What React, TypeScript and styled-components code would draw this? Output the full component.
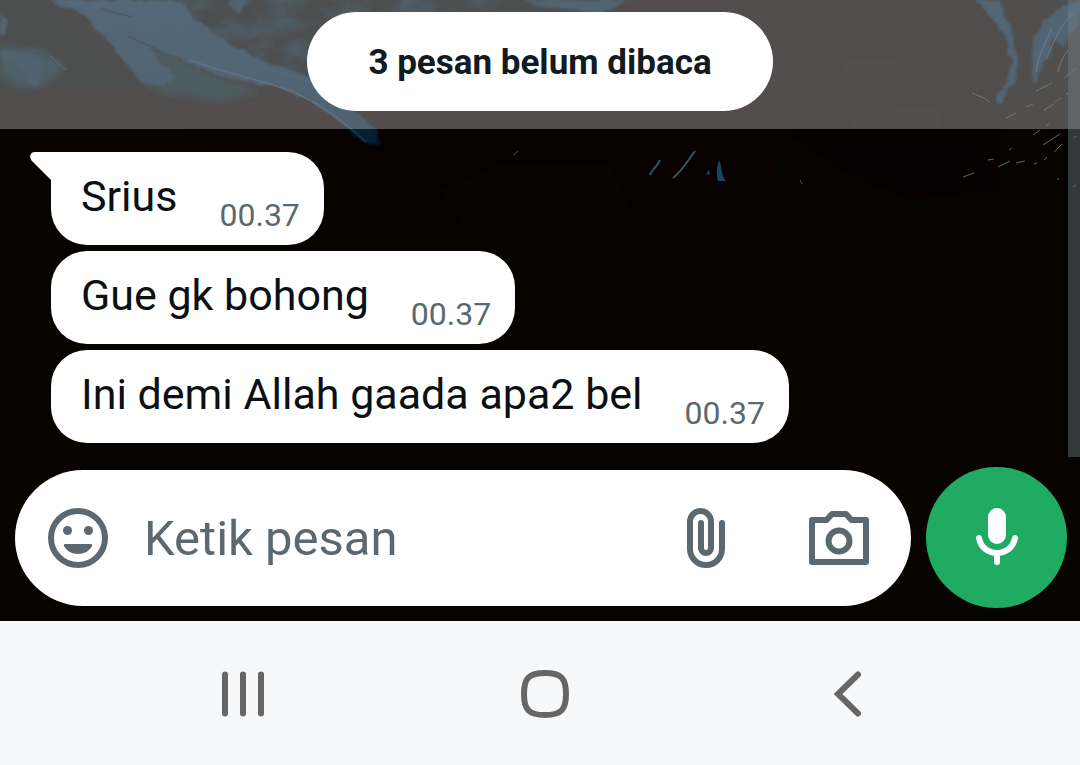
import React from "react";
import styled, { createGlobalStyle } from "styled-components";

const GlobalStyle = createGlobalStyle`
  *, *::before, *::after { box-sizing: border-box; }
  body { margin: 0; background: #070400; }
  body, button, input { font-family: Roboto, "Liberation Sans", sans-serif; }
`;

const Screen = styled.div`
  display: flex;
  flex-direction: column;
  min-height: 100vh;
`;

const Chat = styled.main`
  position: relative;
  isolation: isolate;
  flex: 1;
  display: flex;
  flex-direction: column;
  background: #070400;
  overflow: hidden;
`;

const WallpaperArt = styled.svg`
  position: absolute;
  inset: 0;
  width: 100%;
  height: 100%;
  z-index: -1;
`;

const UnreadStrip = styled.div`
  display: flex;
  justify-content: center;
  padding: 12px 0 18px;
  background: rgba(255, 255, 255, 0.3);
`;

const UnreadPill = styled.div`
  padding: 30px 61px 27px;
  border-radius: 50px;
  background: #fff;
  color: #111b21;
  font-size: 35px;
  font-weight: 700;
  line-height: 42px;
`;

const ScrollThumb = styled.div`
  position: absolute;
  top: 0;
  right: 0;
  bottom: 164px;
  width: 12px;
  background: rgba(112, 130, 140, 0.42);
`;

const Messages = styled.ul`
  flex: 1;
  display: flex;
  flex-direction: column;
  align-items: flex-start;
  gap: 6px;
  margin: 0;
  padding: 23px 51px 24px;
  list-style: none;
`;

const Bubble = styled.li<{ $first?: boolean }>`
  position: relative;
  display: flex;
  align-items: flex-end;
  gap: 42px;
  padding: 16px 24px 12px 30px;
  border-radius: ${(p) => (p.$first ? "0 36px 36px 36px" : "36px")};
  background: #fff;
`;

const BubbleTail = styled.svg`
  position: absolute;
  top: 0;
  left: -21px;
  width: 22px;
  height: 30px;
`;

const BubbleText = styled.span`
  padding-bottom: 9px;
  color: #0a1014;
  font-size: 43px;
  line-height: 56px;
`;

const BubbleTime = styled.time`
  color: #5b6870;
  font-size: 32px;
  line-height: 36px;
`;

const Composer = styled.form`
  display: flex;
  align-items: center;
  gap: 15px;
  padding: 0 13px 13px 15px;
`;

const InputPill = styled.div`
  flex: 1;
  min-width: 0;
  height: 136px;
  display: flex;
  align-items: center;
  padding: 0 36px 0 27px;
  border-radius: 68px;
  background: #fff;
`;

const MessageInput = styled.input`
  flex: 1;
  min-width: 0;
  margin: 0 27px;
  padding: 3px 0 0 3px;
  border: 0;
  outline: 0;
  background: transparent;
  color: #0a1014;
  font-size: 49px;
  line-height: 60px;
  &::placeholder { color: #5b6870; opacity: 1; }
`;

const IconButton = styled.button`
  flex: none;
  display: block;
  padding: 0;
  border: 0;
  background: none;
  color: #5b6870;
`;

const Attachments = styled.div`
  display: flex;
  gap: 61px;
`;

const MicButton = styled.button`
  flex: none;
  width: 141px;
  height: 141px;
  display: grid;
  place-items: center;
  padding: 0;
  border: 0;
  border-radius: 50%;
  background: #1fab61;
  color: #fff;
`;

const Icon = styled.svg<{ $size?: number }>`
  display: block;
  width: ${(p) => p.$size ?? 72}px;
  height: ${(p) => p.$size ?? 72}px;
`;

const NavBar = styled.nav`
  display: flex;
  justify-content: space-between;
  align-items: center;
  height: 144px;
  padding: 2px 19% 0 20%;
  background: #f7f8fa;
`;

const NavButton = styled.button`
  padding: 0;
  border: 0;
  background: none;
  color: #666;
`;

const messages = ["Srius", "Gue gk bohong", "Ini demi Allah gaada apa2 bel"];

function Wallpaper() {
  return (
    <WallpaperArt viewBox="0 0 1080 621" preserveAspectRatio="xMidYMin slice" aria-hidden="true">
      <defs>
        <filter id="rough" x="-10%" y="-10%" width="120%" height="120%" colorInterpolationFilters="sRGB">
          <feTurbulence type="fractalNoise" baseFrequency="0.06" numOctaves="3" seed="4" result="n" />
          <feDisplacementMap in="SourceGraphic" in2="n" scale="8" xChannelSelector="R" yChannelSelector="G" />
          <feGaussianBlur stdDeviation="1" />
        </filter>
        <filter id="haze" x="-10%" y="-10%" width="120%" height="120%">
          <feGaussianBlur stdDeviation="4" />
        </filter>
        <filter id="mottle" x="0" y="0" width="100%" height="100%" colorInterpolationFilters="sRGB">
          <feTurbulence type="fractalNoise" baseFrequency="0.03 0.05" numOctaves="4" seed="9" />
          <feColorMatrix values="0 0 0 0 0.01  0 0 0 0 0.09  0 0 0 0 0.14  2.5 0 0 0 -0.9" />
          <feComposite in2="SourceGraphic" operator="in" />
        </filter>
        <linearGradient id="ice" x1="0" y1="0" x2="0" y2="1">
          <stop offset="0" stopColor="#0a2740" />
          <stop offset="0.700" stopColor="#072236" />
          <stop offset="1" stopColor="#051d30" />
        </linearGradient>
      </defs>
      <path d="M380 0H830L800 60 770 190 740 170 640 215 540 185 510 215 430 225 380 170 180 128V90L400 60Z" fill="#090000" />
      <path d="M780 0H1000V190L910 200 850 175 780 130Z" fill="#080000" />
      <path d="M500 165H610L630 205 540 220 470 235 440 190Z" fill="#080500" />
      <path d="M845 60H895V110H940V128H850Z" fill="#080500" />
      <path d="M0 0H50L110 60 150 88H60L0 90Z" fill="#000302" />
      <path d="M180 0H640L600 12 500 30 310 80 250 56 200 25Z" fill="#000302" />
      <path d="M180 0H640L600 12 500 30 310 80 250 56 200 25Z" fill="#000" filter="url(#mottle)" />
      <path d="M110 40 160 50 220 76 262 92 220 102 170 95 145 85Z" fill="#04161f" filter="url(#haze)" />
      <path d="M0 46 40 50 66 66 48 84 20 88 0 76Z" fill="#041a26" filter="url(#haze)" />
      <g filter="url(#rough)">
        <path d="M50 0H178L200 24 232 45 268 62 310 78 332 98 352 112 378 128 380 146 362 142 345 125 322 108 290 90 250 82 215 74 178 58 150 46 158 62 176 76 160 88 144 82 126 62 108 42 84 15Z" fill="url(#ice)" />
        <path d="M0 50 30 54 44 62 42 80 38 90 26 82 20 66 0 60Z" fill="#062030" />
        <path d="M0 14 7 22 6 36 0 38Z" fill="#082438" />
        <path d="M226 0H250L240 14 234 10Z" fill="#052032" />
        <path d="M520 0H625L618 6 600 12 560 10Z" fill="#062236" />
        <path d="M974 0H1000L1003 16 1012 34 1016 52 1018 66 1016 82 1006 90 1000 106 996 104 998 92 1010 80 1012 62 1008 44 998 24 984 8Z" fill="#08243a" />
        <path d="M1032 38 1045 20 1064 6 1080 0V22L1068 32 1062 48 1054 38 1050 56 1042 66 1036 84 1033 82Z" fill="#07233a" />
      </g>
      <path d="M190 60C220 72 262 80 288 90S340 118 366 142" fill="none" stroke="#12344e" strokeWidth="2" />
      <path d="M212 55C250 68 286 72 312 82M108 8C118 13 124 14 132 16" fill="none" stroke="#0b2a40" strokeWidth="1" />
      <path d="M50 56 66 70" fill="none" stroke="#16303c" strokeWidth="1" />
      <path d="M102 8C114 14 124 14 132 17M128 36C144 44 160 50 178 60" fill="none" stroke="#031624" strokeWidth="2" />
      <path d="M1036 72C1038 56 1046 40 1052 28M1046 60C1052 46 1060 24 1074 12M1058 72C1060 62 1064 56 1068 50" fill="none" stroke="#2c4353" strokeWidth="1" />
      <path d="M650 175C653 168 658 166 660 160M673 178C681 172 685 165 695 151" fill="none" stroke="#375265" strokeWidth="2" />
      <path d="M718 181C715 170 718 165 719 160C723 167 720 174 726 181ZM706 174 709 170 710 175Z" fill="#1f4261" />
      <path d="M514 155 518 151M800 180 802 184" stroke="#4d4c40" strokeWidth="1" />
      <path d="M972 93 984 98 990 102M1036 91 1052 83M1055 102 1061 98M1026 107 1033 104M1064 78 1076 68M1066 94 1068 93M1006 118 1016 113M1044 110 1054 104M1046 126 1049 124" fill="none" stroke="#343c40" strokeWidth="1" />
      <path d="M963 177 974 173M988 160 994 159M998 167 1010 161M1016 163 1025 161M1034 164 1037 163M1043 145 1060 134M1054 152 1062 144M1033 135 1040 130M1009 150 1012 148M1044 160 1047 157M1057 180 1059 178M1074 138 1077 136M1073 187 1076 185" fill="none" stroke="#5a646a" strokeWidth="1" />
    </WallpaperArt>
  );
}

export default function App() {
  return (
    <>
      <GlobalStyle />
      <Screen>
        <Chat>
          <Wallpaper />
          <UnreadStrip>
            <UnreadPill>3 pesan belum dibaca</UnreadPill>
          </UnreadStrip>
          <Messages>
            {messages.map((text, i) => (
              <Bubble key={text} $first={i === 0}>
                {i === 0 && (
                  <BubbleTail viewBox="0 0 22 30" aria-hidden="true">
                    <path d="M22 0H5C0 0-1 5 1.500 8.500L21 28H22Z" fill="#fff" />
                  </BubbleTail>
                )}
                <BubbleText>{text}</BubbleText>
                <BubbleTime>00.37</BubbleTime>
              </Bubble>
            ))}
          </Messages>
          <Composer onSubmit={(e) => e.preventDefault()}>
            <InputPill>
              <IconButton type="button" aria-label="Emoji">
                <Icon viewBox="0 0 72 72" fill="currentColor">
                  <circle cx="36" cy="36" r="27" fill="none" stroke="currentColor" strokeWidth="6" />
                  <circle cx="25.500" cy="28.500" r="4.500" />
                  <circle cx="46.500" cy="28.500" r="4.500" />
                  <path d="M23 42H49C50 42 50.500 43 50 44C47.500 49 42 52 36 52S24.500 49 22 44C21.500 43 22 42 23 42Z" />
                </Icon>
              </IconButton>
              <MessageInput type="text" placeholder="Ketik pesan" aria-label="Ketik pesan" />
              <Attachments>
                <IconButton type="button" aria-label="Lampirkan">
                  <Icon viewBox="0 0 72 72" fill="none" stroke="currentColor" strokeWidth="6" strokeLinecap="round">
                    <path d="M52 21V47A16 16 0 0 1 20 47V19.500A10.500 10.500 0 0 1 41 19.500V46A5 5 0 0 1 31 46V21" />
                  </Icon>
                </IconButton>
                <IconButton type="button" aria-label="Kamera">
                  <Icon viewBox="0 0 72 72" fill="none" stroke="currentColor" strokeWidth="6" strokeLinejoin="round">
                    <path d="M9 18H23.500L29 12H43L48.500 18H63V60H9Z" />
                    <circle cx="36" cy="39" r="10.500" />
                  </Icon>
                </IconButton>
              </Attachments>
            </InputPill>
            <MicButton type="button" aria-label="Pesan suara">
              <Icon viewBox="0 0 72 72" fill="none" stroke="currentColor" strokeWidth="6" strokeLinecap="round">
                <rect x="27" y="6" width="18" height="36" rx="9" fill="currentColor" stroke="none" />
                <path d="M18 36C19.500 45 27 51 36 51S52.500 45 54 36M36 51V60" />
              </Icon>
            </MicButton>
          </Composer>
          <ScrollThumb />
        </Chat>
        <NavBar aria-label="Navigasi sistem">
          <NavButton type="button" aria-label="Aplikasi terbaru">
            <Icon $size={54} viewBox="0 0 54 54" fill="none" stroke="currentColor" strokeWidth="6" strokeLinecap="round">
              <path d="M9 7.500V46.500M27 7.500V46.500M45 7.500V46.500" />
            </Icon>
          </NavButton>
          <NavButton type="button" aria-label="Beranda">
            <Icon $size={54} viewBox="0 0 54 54" fill="none" stroke="currentColor" strokeWidth="6">
              <path d="M27 6C43 6 48 11 48 27S43 48 27 48 6 43 6 27 11 6 27 6Z" />
            </Icon>
          </NavButton>
          <NavButton type="button" aria-label="Kembali">
            <Icon $size={54} viewBox="0 0 54 54" fill="none" stroke="currentColor" strokeWidth="6" strokeLinecap="round">
              <path d="M37 7.500 17 27 37 46.500" />
            </Icon>
          </NavButton>
        </NavBar>
      </Screen>
    </>
  );
}
